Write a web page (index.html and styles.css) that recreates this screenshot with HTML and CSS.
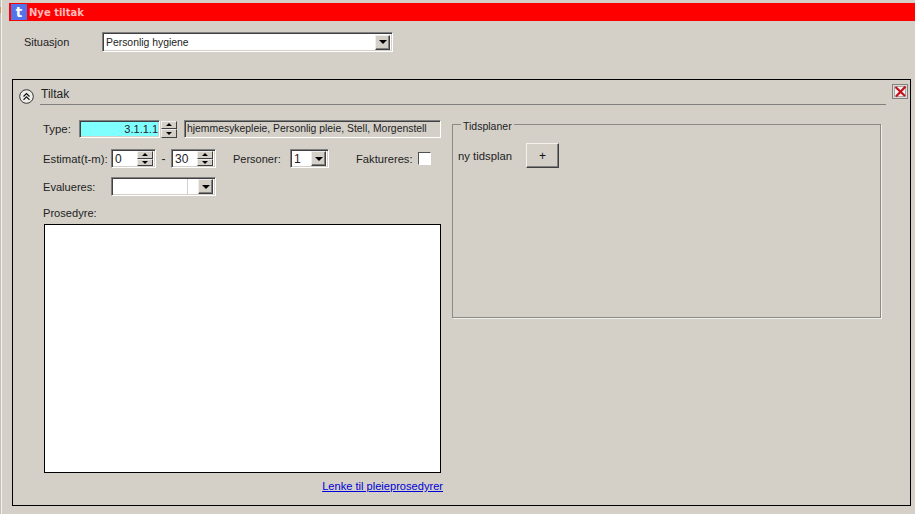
FILE: index.html
```html
<!DOCTYPE html>
<html lang="no">
<head>
<meta charset="utf-8">
<title>Nye tiltak</title>
<link rel="stylesheet" href="styles.css">
</head>
<body>
<div class="app">
  <div class="titlebar">
    <span class="logo">t</span>
    <span class="title">Nye tiltak</span>
  </div>
  <div class="situation">
    <span class="situation-label">Situasjon</span>
    <div class="field combo combo-situation">
      <span class="value">Personlig hygiene</span>
      <span class="drop"><i class="arrow-down"></i></span>
    </div>
  </div>
  <section class="panel">
    <header class="panel-head">
      <svg class="collapse" width="15" height="15" viewBox="0 0 15 15">
        <circle cx="7.5" cy="7.5" r="6.800" fill="#f0eee8" stroke="#333" stroke-width="1"/>
        <path d="M4.500 7.500 7.500 4.500 10.500 7.500M4.500 10.800 7.500 7.800 10.500 10.800" fill="none" stroke="#111" stroke-width="1.200"/>
      </svg>
      <div class="panel-title">Tiltak</div>
      <svg class="close" width="16" height="15" viewBox="0 0 16 15">
        <rect x=".5" y=".5" width="15" height="14" fill="#dedcd6" stroke="#808080"/>
        <rect x="2.500" y="2.500" width="11" height="10" fill="#f4f3ef" stroke="#666" stroke-dasharray="1 1"/>
        <path d="M3.500 3 13 12M13.500 2.500 4 12.500" stroke="#c4101c" stroke-width="2.200"/>
      </svg>
    </header>
    <div class="panel-body">
      <div class="left">
        <div class="row row-type">
          <span class="lbl lbl-type">Type:</span>
          <div class="field type-input">3.1.1.1</div>
          <div class="spin spin-type"><b><i class="tiny-up"></i></b><b><i class="tiny-down"></i></b></div>
          <div class="field type-desc">hjemmesykepleie, Personlig pleie, Stell, Morgenstell</div>
        </div>
        <div class="row row-estimate">
          <span class="lbl lbl-estimate">Estimat(t-m):</span>
          <div class="field num">
            <span class="value">0</span>
            <div class="spin"><b><i class="tiny-up"></i></b><b><i class="tiny-down"></i></b></div>
          </div>
          <span class="dash">-</span>
          <div class="field num">
            <span class="value">30</span>
            <div class="spin"><b><i class="tiny-up"></i></b><b><i class="tiny-down"></i></b></div>
          </div>
          <span class="lbl lbl-persons">Personer:</span>
          <div class="field combo combo-persons">
            <span class="value">1</span>
            <span class="drop"><i class="arrow-down"></i></span>
          </div>
          <span class="lbl lbl-invoice">Faktureres:</span>
          <span class="check"></span>
        </div>
        <div class="row row-evaluate">
          <span class="lbl lbl-evaluate">Evalueres:</span>
          <div class="field combo combo-evaluate">
            <span class="value"></span>
            <span class="drop"><i class="arrow-down"></i></span>
          </div>
        </div>
        <div class="lbl lbl-procedure">Prosedyre:</div>
        <div class="procedure"></div>
        <div class="link-row"><a class="link" href="#">Lenke til pleieprosedyrer</a></div>
      </div>
      <fieldset class="plans">
        <legend>Tidsplaner</legend>
        <div class="plans-row">
          <span class="lbl">ny tidsplan</span>
          <button class="add" type="button">+</button>
        </div>
      </fieldset>
    </div>
  </section>
</div>
</body>
</html>
```
FILE: styles.css
```css
* { box-sizing: border-box; }
html, body { margin: 0; padding: 0; }
body {
  width: 915px;
  height: 514px;
  overflow: hidden;
  background: #d4d0c8;
  font-family: "Liberation Sans", Arial, sans-serif;
  font-size: 11px;
  color: #222;
}
.app {
  width: 915px;
  height: 514px;
  padding-top: 3px;
  background:
    linear-gradient(#c89a60, #c89a60) 0 7px / 1px 6px no-repeat,
    linear-gradient(to right, #c4c0b8 0 1px, #f4f2ec 1px 2.500px, #d4d0c8 2.500px);
  overflow: hidden;
}
.titlebar {
  display: flex;
  align-items: center;
  height: 18px;
  margin-left: 9px;
  padding-left: 2px;
  background: #ff0000;
}
.logo {
  display: block;
  width: 16px;
  height: 16px;
  background: #5473e8;
  color: #fff;
  font: bold 13.500px/16px "DejaVu Sans", sans-serif;
  text-align: center;
}
.title {
  margin: 1px 0 0 2px;
  color: #ffbcbc;
  font: bold 10px/16px "DejaVu Sans", sans-serif;
}
.situation {
  display: flex;
  align-items: center;
  height: 20px;
  margin: 11px 0 0 24px;
}
.situation-label { width: 78px; font-size: 11px; }
.field {
  background: #fff;
  border: 1px solid;
  border-color: #808080 #fff #fff #808080;
  box-shadow: inset 1px 1px 0 #404040, inset -1px -1px 0 #d4d0c8;
}
.combo {
  display: flex;
  align-items: center;
  justify-content: space-between;
  padding: 2px 2px 2px 3px;
  font-size: 10.400px;
}
.combo-situation { width: 291px; height: 20px; }
.drop {
  display: flex;
  align-items: center;
  justify-content: center;
  width: 15px;
  height: 15px;
  flex: none;
  background: #d4d0c8;
  border: 1px solid;
  border-color: #eee #404040 #404040 #eee;
  box-shadow: inset -1px -1px 0 #808080;
}
.arrow-down {
  width: 0;
  height: 0;
  border-left: 4px solid transparent;
  border-right: 4px solid transparent;
  border-top: 4px solid #000;
}
.panel {
  width: 899px;
  height: 427px;
  margin: 27px 0 0 12px;
  border: 1px solid #000;
}
.panel-head {
  display: flex;
  align-items: flex-start;
  height: 25px;
  padding-left: 6px;
}
.collapse { margin-top: 9px; flex: none; }
.panel-title {
  width: 846px;
  height: 25px;
  margin-left: 6px;
  padding: 7px 0 0 1px;
  font-size: 12px;
  line-height: 14px;
  border-bottom: 1px solid #808080;
}
.close { margin: 4px 0 0 6px; flex: none; }
.panel-body {
  display: flex;
  align-items: flex-start;
}
.left {
  width: 409px;
  margin-left: 30px;
  padding-top: 15px;
}
.row { display: flex; align-items: center; }
.lbl { white-space: nowrap; font-size: 11.100px; }
.row-type { height: 18px; }
.lbl-type { width: 36px; font-size: 11.400px; }
.type-input {
  width: 81px;
  height: 18px;
  padding-right: 1px;
  background: #80ffff;
  text-align: right;
  font-size: 11px;
  line-height: 16px;
}
.spin {
  display: flex;
  flex-direction: column;
  width: 16px;
  height: 15px;
}
.spin-type { margin-left: 1px; height: 17px; }
.spin b {
  display: flex;
  flex: 1;
  align-items: center;
  justify-content: center;
  background: #d4d0c8;
  border: 1px solid;
  border-color: #eee #404040 #404040 #eee;
}
.tiny-up, .tiny-down {
  width: 0;
  height: 0;
  border-left: 3px solid transparent;
  border-right: 3px solid transparent;
}
.tiny-up { border-bottom: 3px solid #000; }
.tiny-down { border-top: 3px solid #000; }
.type-desc {
  width: 257px;
  height: 18px;
  margin-left: 7px;
  padding-left: 2px;
  background: #d4d0c8;
  font-size: 10.400px;
  line-height: 16px;
  white-space: nowrap;
  overflow: hidden;
}
.row-estimate { height: 19px; margin-top: 11px; }
.lbl-estimate { width: 68px; font-size: 11.300px; }
.num {
  display: flex;
  align-items: center;
  justify-content: space-between;
  width: 45px;
  height: 19px;
  padding: 2px 2px 2px 3px;
  font-size: 12px;
}
.dash { width: 15px; text-align: center; font-size: 12px; }
.lbl-persons { margin-left: 17px; width: 57px; font-size: 11px; }
.combo-persons { width: 39px; height: 19px; font-size: 12px; }
.lbl-invoice { margin-left: 27px; width: 62px; font-size: 11.200px; }
.check {
  display: block;
  width: 13px;
  height: 13px;
  background: #fff;
  border: 1px solid;
  border-color: #505050 #fff #fff #505050;
}
.row-evaluate { height: 19px; margin-top: 9px; }
.lbl-evaluate { width: 68px; }
.combo-evaluate { width: 105px; height: 19px; }
.combo-evaluate .value {
  display: block;
  width: 73px;
  height: 15px;
  border-right: 1px solid #d4d0c8;
}
.lbl-procedure { margin-top: 11px; line-height: 13px; }
.procedure {
  width: 397px;
  height: 249px;
  margin: 4px 0 0 1px;
  background: #fff;
  border: 1px solid #000;
}
.link-row { text-align: right; padding-top: 7px; padding-right: 9px; }
.link {
  color: #0000d8;
  font-size: 11.100px;
  line-height: 13px;
}
.plans {
  width: 429px;
  height: 202px;
  margin: 11px 0 0 0;
  padding: 10px 5px 0;
  border: 1px solid #8c8a84;
  box-shadow: 1px 1px 0 #f2f0ea;
}
.plans legend {
  margin-left: 3px;
  padding: 4px 2px 0;
  font-size: 10.500px;
  line-height: 13px;
}
.plans-row { display: flex; align-items: center; }
.plans-row .lbl { width: 68px; font-size: 11.300px; }
.add {
  width: 33px;
  height: 25px;
  padding: 0;
  background: #d4d0c8;
  font: 12px "Liberation Sans", sans-serif;
  color: #111;
  border: 1px solid;
  border-color: #f4f2ec #404040 #404040 #f4f2ec;
  box-shadow: inset -1px -1px 0 #808080;
}
```
